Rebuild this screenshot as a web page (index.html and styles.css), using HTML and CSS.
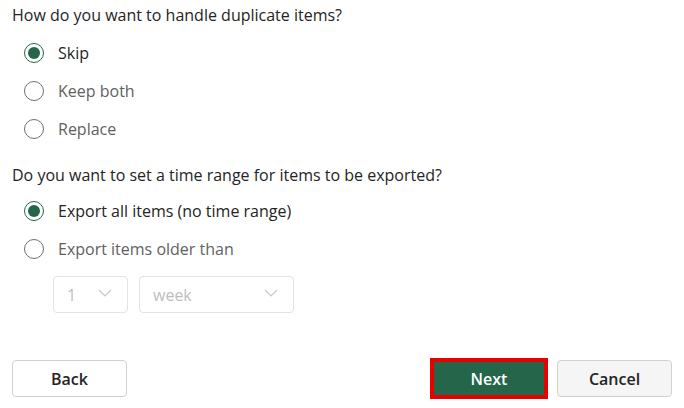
FILE: index.html
```html
<!DOCTYPE html>
<html>
<head>
<meta charset="utf-8">
<link rel="stylesheet" href="styles.css">
</head>
<body>
<div class="page">
  <div class="question">How do you want to handle duplicate items?</div>
  <div class="options">
    <div class="option"><span class="radio checked"></span><span class="label">Skip</span></div>
    <div class="option"><span class="radio"></span><span class="label muted">Keep both</span></div>
    <div class="option"><span class="radio"></span><span class="label muted">Replace</span></div>
  </div>
  <div class="question q2">Do you want to set a time range for items to be exported?</div>
  <div class="options tight">
    <div class="option"><span class="radio checked"></span><span class="label">Export all items (no time range)</span></div>
    <div class="option"><span class="radio"></span><span class="label muted">Export items older than</span></div>
  </div>
  <div class="selects">
    <div class="select small"><span>1</span><svg width="14" height="8" viewBox="0 0 14 8"><path d="M1 1l6 6 6-6" fill="none" stroke="#c8c8c8" stroke-width="1.2"/></svg></div>
    <div class="select wide"><span>week</span><svg width="14" height="8" viewBox="0 0 14 8"><path d="M1 1l6 6 6-6" fill="none" stroke="#c8c8c8" stroke-width="1.2"/></svg></div>
  </div>
  <div class="footer">
    <button class="btn">Back</button>
    <div class="right">
      <div class="highlight"><button class="btn primary">Next</button></div>
      <button class="btn secondary">Cancel</button>
    </div>
  </div>
</div>
</body>
</html>
```
FILE: styles.css
```css
html, body {
  margin: 0;
  padding: 0;
  background: #ffffff;
}
body {
  font-family: "Open Sans", "Noto Sans", sans-serif;
  font-size: 16px;
  color: #242424;
}
.page {
  width: 684px;
  height: 408px;
  padding: 4px 12px 0 12px;
  box-sizing: border-box;
  display: flex;
  flex-direction: column;
}
.question {
  height: 22px;
  line-height: 22px;
}
.q2 {
  margin-top: 16px;
}
.options {
  display: flex;
  flex-direction: column;
  padding-left: 12px;
  margin-top: 8px;
}
.options.tight {
  margin-top: 6px;
}
.option {
  display: flex;
  align-items: center;
  height: 38px;
}
.radio {
  width: 20px;
  height: 20px;
  border: 1px solid #707070;
  border-radius: 50%;
  box-sizing: border-box;
  display: flex;
  align-items: center;
  justify-content: center;
  flex: none;
}
.radio.checked {
  border-color: #25664b;
}
.radio.checked::after {
  content: "";
  width: 12px;
  height: 12px;
  border-radius: 50%;
  background: #25664b;
}
.label {
  margin-left: 14px;
}
.muted {
  color: #616161;
}
.selects {
  display: flex;
  gap: 11px;
  padding-left: 41px;
  margin-top: 8px;
}
.select {
  height: 37px;
  border: 1px solid #e3e3e3;
  border-radius: 4px;
  box-sizing: border-box;
  display: flex;
  align-items: center;
  justify-content: space-between;
  padding: 0 15px 0 13px;
  color: #bdbdbd;
}
.select svg {
  margin-top: -4px;
}
.select.small {
  width: 75px;
}
.select.wide {
  width: 155px;
}
.footer {
  margin-top: auto;
  margin-bottom: 9px;
  display: flex;
  justify-content: space-between;
  align-items: center;
}
.right {
  display: flex;
  align-items: center;
  gap: 9px;
}
.btn {
  font-family: "Open Sans", "Noto Sans", sans-serif;
  font-size: 16px;
  font-weight: 600;
  color: #242424;
  width: 115px;
  height: 37px;
  border: 1px solid #d1d1d1;
  border-radius: 4px;
  background: #ffffff;
  padding: 0;
}
.btn.secondary {
  background: #f5f5f5;
}
.highlight {
  border: 4px solid #e60000;
  display: flex;
}
.btn.primary {
  width: 110px;
  height: 33px;
  background: #25664b;
  color: #ffffff;
  border: none;
  border-radius: 0;
}
```
